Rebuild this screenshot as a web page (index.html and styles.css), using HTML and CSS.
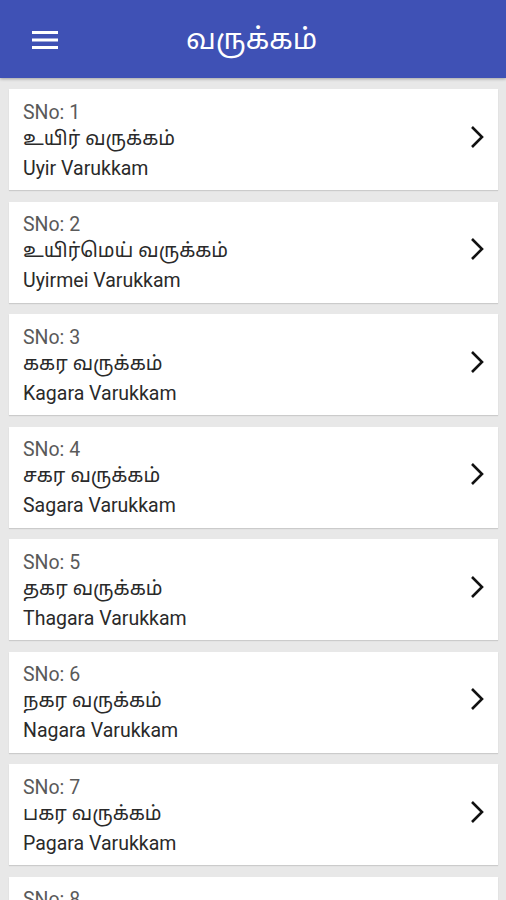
FILE: index.html
```html
<!DOCTYPE html>
<html>
<head>
<meta charset="utf-8">
<link rel="stylesheet" href="styles.css">
</head>
<body>
<header class="appbar">
  <svg class="menu" width="26" height="18" viewBox="0 0 26 18"><rect x="0" y="0" width="26" height="3" fill="#fff"/><rect x="0" y="7.5" width="26" height="3" fill="#fff"/><rect x="0" y="15" width="26" height="3" fill="#fff"/></svg>
  <h1 class="title">வருக்கம்</h1>
</header>
<main class="list">
  <div class="card"><div class="text"><div class="sno">SNo: 1</div><div class="ta">உயிர் வருக்கம்</div><div class="en">Uyir Varukkam</div></div><svg class="chev" width="14" height="24" viewBox="0 0 14 24"><path d="M2 2 L12 12 L2 22" fill="none" stroke="#111" stroke-width="2.6"/></svg></div>
  <div class="card"><div class="text"><div class="sno">SNo: 2</div><div class="ta">உயிர்மெய் வருக்கம்</div><div class="en">Uyirmei Varukkam</div></div><svg class="chev" width="14" height="24" viewBox="0 0 14 24"><path d="M2 2 L12 12 L2 22" fill="none" stroke="#111" stroke-width="2.6"/></svg></div>
  <div class="card"><div class="text"><div class="sno">SNo: 3</div><div class="ta">ககர வருக்கம்</div><div class="en">Kagara Varukkam</div></div><svg class="chev" width="14" height="24" viewBox="0 0 14 24"><path d="M2 2 L12 12 L2 22" fill="none" stroke="#111" stroke-width="2.6"/></svg></div>
  <div class="card"><div class="text"><div class="sno">SNo: 4</div><div class="ta">சகர வருக்கம்</div><div class="en">Sagara Varukkam</div></div><svg class="chev" width="14" height="24" viewBox="0 0 14 24"><path d="M2 2 L12 12 L2 22" fill="none" stroke="#111" stroke-width="2.6"/></svg></div>
  <div class="card"><div class="text"><div class="sno">SNo: 5</div><div class="ta">தகர வருக்கம்</div><div class="en">Thagara Varukkam</div></div><svg class="chev" width="14" height="24" viewBox="0 0 14 24"><path d="M2 2 L12 12 L2 22" fill="none" stroke="#111" stroke-width="2.6"/></svg></div>
  <div class="card"><div class="text"><div class="sno">SNo: 6</div><div class="ta">நகர வருக்கம்</div><div class="en">Nagara Varukkam</div></div><svg class="chev" width="14" height="24" viewBox="0 0 14 24"><path d="M2 2 L12 12 L2 22" fill="none" stroke="#111" stroke-width="2.6"/></svg></div>
  <div class="card"><div class="text"><div class="sno">SNo: 7</div><div class="ta">பகர வருக்கம்</div><div class="en">Pagara Varukkam</div></div><svg class="chev" width="14" height="24" viewBox="0 0 14 24"><path d="M2 2 L12 12 L2 22" fill="none" stroke="#111" stroke-width="2.6"/></svg></div>
  <div class="card"><div class="text"><div class="sno">SNo: 8</div><div class="ta">மகர வருக்கம்</div><div class="en">Magara Varukkam</div></div><svg class="chev" width="14" height="24" viewBox="0 0 14 24"><path d="M2 2 L12 12 L2 22" fill="none" stroke="#111" stroke-width="2.6"/></svg></div>
</main>
</body>
</html>
```
FILE: styles.css
```css
html, body {
  margin: 0;
  padding: 0;
  background: #e8e8e8;
  font-family: Roboto, "Noto Sans", sans-serif;
  overflow: hidden;
  height: 900px;
}
.appbar {
  height: 78px;
  background: #3f51b5;
  display: flex;
  align-items: center;
  padding-left: 32px;
  box-shadow: 0 1px 3px rgba(0,0,0,0.3);
  position: relative;
  z-index: 1;
}
.menu {
  margin-top: 2px;
}
.title {
  margin: 5px 0 0 128px;
  color: #fff;
  font-family: "Noto Sans Tamil", Roboto, sans-serif;
  font-size: 28.5px;
  font-weight: normal;
}
.list {
  display: flex;
  flex-direction: column;
  gap: 11.5px;
  padding: 11px 8px 0 9px;
  height: 811px;
  overflow: hidden;
}
.card {
  background: #fff;
  height: 101px;
  box-sizing: border-box;
  display: flex;
  align-items: center;
  justify-content: space-between;
  padding: 0 14px 0 14px;
  box-shadow: 0 1px 1px rgba(0,0,0,0.12);
  flex-shrink: 0;
}
.text {
  font-size: 19.5px;
  line-height: 29px;
  color: #2a2a2a;
  margin-top: 1px;
}
.sno {
  color: #5a5a5a;
  margin-bottom: -1px;
}
.ta {
  font-family: "Noto Sans Tamil", Roboto, sans-serif;
  font-size: 19.5px;
  margin-bottom: -1px;
}
.chev {
  margin-top: -6px;
}
```
